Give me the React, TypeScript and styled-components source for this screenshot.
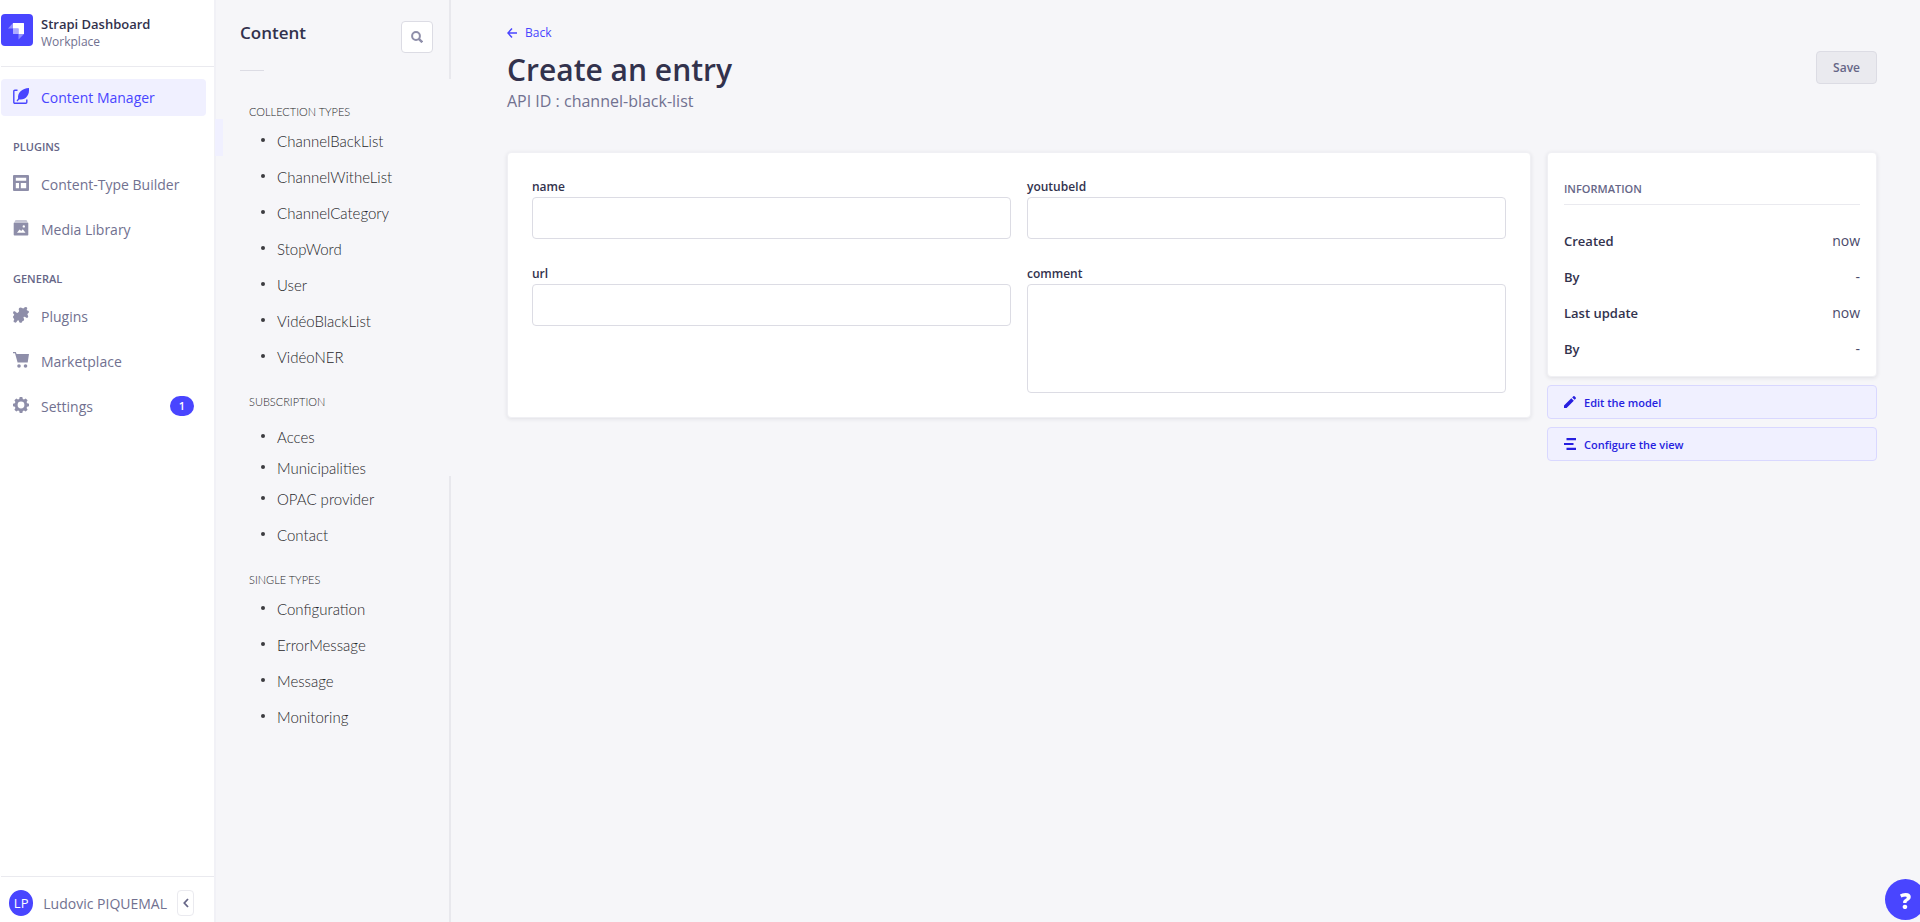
import React from "react";
import styled, { createGlobalStyle, css } from "styled-components";

const GlobalStyle = createGlobalStyle`
  *, *::before, *::after { box-sizing: border-box; }
  body {
    margin: 0;
    background: #f6f6f9;
    color: #32324d;
    font-family: "Open Sans", "Noto Sans", sans-serif;
    font-size: 14px;
    overflow-x: hidden;
  }
  h1, h2, h3, p, ul, dl, dd { margin: 0; padding: 0; }
  ul { list-style: none; }
  a { color: inherit; text-decoration: none; }
  button, input, textarea { font: inherit; }
  svg { display: block; flex: none; }
`;

const Shell = styled.div`
  display: flex;
  min-height: 100vh;
`;

/* Primary navigation */

const Sidebar = styled.nav`
  flex: none;
  display: flex;
  flex-direction: column;
  width: 216px;
  padding-left: 1px;
  background: #fff;
  border-right: 2px solid #f1f1f6;
`;

const Brand = styled.header`
  display: flex;
  align-items: center;
  gap: 8px;
  height: 67px;
  padding-bottom: 7px;
  border-bottom: 1px solid #eaeaef;
`;

const BrandText = styled.div`
  padding-top: 7px;
`;

const BrandName = styled.p`
  font-size: 13px;
  font-weight: 600;
  line-height: 18px;
`;

const BrandPlace = styled.p`
  color: #717190;
  font-size: 12px;
  line-height: 18px;
`;

const MainLinks = styled.div`
  flex: 1;
  padding-top: 12px;
`;

const NavSection = styled.section`
  padding-top: 22px;

  & + & { padding-top: 18px; }
`;

const SectionTitle = styled.h2`
  padding: 0 12px 6px;
  color: #666687;
  font-size: 11px;
  font-weight: 600;
  line-height: 18px;
  text-transform: uppercase;
`;

const NavLink = styled.a<{ $active?: boolean }>`
  display: flex;
  align-items: center;
  gap: 12px;
  height: 45px;
  margin-right: 8px;
  padding: 0 12px;
  color: #717190;
  border-radius: 4px;

  svg {
    margin-bottom: 3px;
    color: #8e8ea9;
  }

  ${(p) =>
    p.$active &&
    css`
      height: 37px;
      background: #f0f0ff;
      color: #4945ff;
      svg { color: #4945ff; }
    `}
`;

const Count = styled.span`
  display: grid;
  place-items: center;
  width: 24px;
  height: 20px;
  margin: 0 0 2px auto;
  border-radius: 10px;
  background: #4945ff;
  color: #fff;
  font-size: 11px;
  font-weight: 600;
`;

const UserBar = styled.footer`
  position: sticky;
  bottom: 0;
  display: flex;
  align-items: center;
  gap: 10px;
  height: 46px;
  padding: 7px 20px 0 8px;
  border-top: 1px solid #eaeaef;
  color: #717190;
  white-space: nowrap;
`;

const Avatar = styled.span`
  display: grid;
  place-items: center;
  width: 26px;
  height: 26px;
  border-radius: 50%;
  background: #4945ff;
  color: #fff;
  font-size: 13px;
`;

const CollapseButton = styled.button`
  display: grid;
  place-items: center;
  width: 18px;
  height: 26px;
  margin-left: auto;
  padding: 0;
  border: 1px solid #eaeaef;
  border-radius: 4px;
  background: #fff;
  color: #666687;
`;

/* Content types panel; its right rule is open between the header and the middle of the list */

const Panel = styled.aside`
  flex: none;
  width: 235px;
  background: linear-gradient(#e8e8ed 79px, transparent 79px 476px, #e8e8ed 476px) right / 2px 100% no-repeat;
`;

const PanelHead = styled.header`
  display: flex;
  justify-content: space-between;
  align-items: flex-start;
  margin: 0 18px 0 24px;
  padding-top: 21px;
`;

const PanelTitle = styled.h2`
  font-size: 17px;
  font-weight: 600;
  line-height: 24px;
`;

const SearchButton = styled.button`
  display: grid;
  place-items: center;
  width: 32px;
  height: 32px;
  padding: 0;
  border: 1px solid #dcdce4;
  border-radius: 4px;
  background: #fff;
  color: #8e8ea9;
`;

const ShortRule = styled.hr`
  width: 24px;
  height: 1px;
  margin: 17px 0 0 24px;
  border: 0;
  background: #dcdce4;
`;

const TypesArea = styled.div`
  padding-top: 14px;
  color: #26262a;
  font-family: Lato, "Open Sans", sans-serif;
  font-weight: 300;
`;

const TypesTitle = styled.h3<{ $loose?: boolean }>`
  padding: 18px 0 ${(p) => (p.$loose ? 8 : 2)}px 33px;
  font-size: 11px;
  font-weight: 300;
  line-height: 18px;
  text-transform: uppercase;
`;

const TypeRow = styled.li<{ $tight?: boolean }>`
  display: flex;
  align-items: center;
  gap: 12px;
  height: ${(p) => (p.$tight ? 26 : 36)}px;
  padding-left: 45px;
  font-size: 15px;

  &::before {
    content: "";
    width: 4px;
    height: 4px;
    margin-bottom: 2px;
    border-radius: 50%;
    background: #3c3c40;
  }
`;

const ActiveMark = styled.span`
  position: absolute;
  top: 119px;
  left: 215px;
  width: 8px;
  height: 37px;
  background: #f0f0ff;
`;

/* Entry editor */

const Main = styled.main`
  flex: 1;
  min-width: 0;
  padding: 23px 43px 56px 56px;
`;

const BackLink = styled.a`
  display: inline-flex;
  align-items: center;
  gap: 8px;
  color: #4945ff;
  font-size: 12px;
  line-height: 18px;
`;

const TitleRow = styled.div`
  display: flex;
  justify-content: space-between;
  align-items: flex-start;
  padding-top: 8px;
`;

const PageTitle = styled.h1`
  font-size: 30px;
  font-weight: 600;
  line-height: 40px;
`;

const Subtitle = styled.p`
  margin-bottom: 40px;
  color: #717190;
  font-size: 16px;
  line-height: 22px;
`;

const SaveButton = styled.button`
  height: 33px;
  margin-top: 1px;
  padding: 0 16px;
  border: 1px solid #dcdce4;
  border-radius: 4px;
  background: #eaeaef;
  color: #666687;
  font-size: 12px;
  font-weight: 600;
`;

const Columns = styled.div`
  display: grid;
  grid-template-columns: minmax(0, 1024fr) minmax(0, 330fr);
  gap: 16px;
  align-items: start;
`;

const Card = styled.section`
  border: 1px solid #f0f0f4;
  border-radius: 4px;
  background: #fff;
  box-shadow: 0 1px 4px rgba(33, 33, 52, 0.1);
`;

const FormCard = styled(Card)`
  display: grid;
  grid-template-columns: 1fr 1fr;
  gap: 26px 16px;
  align-items: start;
  padding: 25px 24px 24px;
`;

const Field = styled.div`
  display: flex;
  flex-direction: column;
`;

const Label = styled.label`
  padding-bottom: 1px;
  font-size: 12px;
  font-weight: 600;
  line-height: 18px;
`;

const control = css`
  width: 100%;
  padding: 0 16px;
  border: 1px solid #dcdce4;
  border-radius: 4px;
  background: #fff;
  color: inherit;
  outline: none;
`;

const TextInput = styled.input`
  ${control}
  height: 42px;
`;

const TextArea = styled.textarea`
  ${control}
  display: block;
  height: 109px;
  padding: 12px 16px;
  resize: none;
`;

const SideColumn = styled.div`
  display: flex;
  flex-direction: column;
  gap: 8px;
`;

const InfoCard = styled(Card)`
  padding: 27px 16px 9px;
`;

const InfoTitle = styled.h2`
  margin-bottom: 18px;
  padding-bottom: 6px;
  border-bottom: 1px solid #eaeaef;
  color: #666687;
  font-size: 11px;
  font-weight: 600;
  line-height: 18px;
  text-transform: uppercase;
`;

const InfoRow = styled.div`
  display: flex;
  justify-content: space-between;
  padding: 8px 0;
  line-height: 20px;

  dt {
    font-size: 13px;
    font-weight: 600;
  }
  dd { color: #4a4a6a; }
`;

const ActionButton = styled.button`
  display: flex;
  align-items: center;
  gap: 8px;
  height: 34px;
  padding: 0 16px;
  border: 1px solid #d9d8ff;
  border-radius: 4px;
  background: #f0f0ff;
  color: #271fe0;
  font-size: 11px;
  font-weight: 600;
`;

const HelpButton = styled.button`
  position: fixed;
  right: -6px;
  bottom: 2px;
  display: grid;
  place-items: center;
  width: 41px;
  height: 41px;
  padding: 0;
  border: 0;
  border-radius: 50%;
  background: #4945ff;
  color: #fff;
  font-size: 22px;
  font-weight: 800;
  line-height: 1;
`;

/* Icons */

const Logo = () => (
  <svg width="32" height="32" viewBox="0 0 32 32" aria-hidden="true">
    <rect width="32" height="32" rx="4" fill="#4945ff" />
    <path d="M12 9h10.500a.5.5 0 0 1 .5.5V20h-5.500v-5.500H12z" fill="#fff" />
    <path d="M12 9v5.500H7z M17.500 20H23l-5.500 5.500z" fill="#fff" opacity=".4" />
    <path d="M12 14.500h5.500V20H12.500a.5.5 0 0 1-.5-.5z" fill="#fff" opacity=".55" />
  </svg>
);

const WriteIcon = () => (
  <svg width="16" height="16" viewBox="0 0 16 16" fill="currentColor" aria-hidden="true">
    <path d="M4.500 2.200H1.800A1 1 0 0 0 .8 3.200v11a1 1 0 0 0 1 1h11a1 1 0 0 0 1-1V11.500" fill="none" stroke="currentColor" strokeWidth="1.400" />
    <path d="M16 0v2.500C16 5.500 14.800 8 12.800 9.800c-2 1.500-4.500 1.700-6.600 1.700L4.300 13.400l-.8-.7 1.600-2.200C4.700 7.500 5.600 5 7.600 3.200 9.700 1.300 12.500.2 16 0z" />
  </svg>
);

const LayoutIcon = () => (
  <svg width="16" height="16" viewBox="0 0 16 16" aria-hidden="true">
    <path fill="currentColor" fillRule="evenodd" d="M1 0h14a1 1 0 0 1 1 1v14a1 1 0 0 1-1 1H1a1 1 0 0 1-1-1V1a1 1 0 0 1 1-1zm1.800 2.700v3h10.400v-3zm0 5.300v5.300H6V8zm5 0v5.300h5.400V8z" />
  </svg>
);

const MediaIcon = () => (
  <svg width="16" height="16" viewBox="0 0 16 16" aria-hidden="true">
    <path d="M2.500 0h11l1 2h-13z" fill="currentColor" opacity=".5" />
    <path fill="currentColor" fillRule="evenodd" d="M1.500 2.500h13a.8.8 0 0 1 .8.8v11.400a.8.8 0 0 1-.8.800h-13a.8.800 0 0 1-.8-.8V3.300a.8.800 0 0 1 .8-.8zM4 12.800h8.500L9.800 9.200 8.200 11 6.600 9.600zM10.800 5.200a1.200 1.200 0 1 0 0 2.400 1.200 1.200 0 0 0 0-2.400z" />
  </svg>
);

const PuzzleIcon = () => (
  <svg width="16" height="16" viewBox="0 0 16 16" fill="currentColor" aria-hidden="true">
    <path d="M6 3.500C5.300 2 6 .4 7.600.4c1.400 0 1.700 1.100 2.700 1 .9-.1 1.200-1.400 2.700-1.300 1.300.1 1.500 1.500.9 2.200-.4.500-.2 1.200.5 1.200 1.200.1 1.700.9 1.500 1.800-.2 1-1.400 1.100-1.500 2 0 .9.800 1.300.8 2.300 0 1.200-1.300 1.600-2.200 1-.9-.7-1.700-1.300-2.300-.6-.6.600.2 1.300.4 2.300.2 1.300-.9 1.900-1.800 1.900 0 1.300-1.700 2.100-2.700 1.200-.7-.7-.4-1.600-1-2-.8-.5-1.500.6-2.100 1.700-.6 1-2.600.9-2.900-.5-.2-1.100.7-1.600.6-2.400C1.100 11.300 0 11.300 0 10c0-1.300 1.200-1.500 1.200-2.300 0-.7-1.200-.9-1.100-2.200C.2 4.200 1.700 4 2.500 4.800c.7.700 1.700 1.600 2.600.8C5.700 5 6.400 4.400 6 3.500z" />
  </svg>
);

const CartIcon = () => (
  <svg width="16" height="16" viewBox="0 0 16 16" fill="currentColor" aria-hidden="true">
    <path d="M0 0h2.800l.8 2H16l-1.300 8.500H4.600L2 1.300H0z" />
    <circle cx="6" cy="14" r="1.800" />
    <circle cx="12.500" cy="14" r="1.800" />
  </svg>
);

const GearIcon = () => (
  <svg width="16" height="16" viewBox="0 0 16 16" fill="currentColor" aria-hidden="true">
    <path fillRule="evenodd" d="M6.700 0h2.600l.5 1.900 1.200.5 1.700-1 1.900 1.900-1 1.700.5 1.200L16 6.700v2.600l-1.900.5-.5 1.200 1 1.700-1.900 1.900-1.700-1-1.200.5-.5 1.900H6.700l-.5-1.900-1.200-.5-1.700 1-1.900-1.900 1-1.700-.5-1.200L0 9.300V6.700l1.900-.5.500-1.200-1-1.700 1.900-1.900 1.700 1 1.200-.5zM8 4.600a3.400 3.400 0 1 0 0 6.800 3.400 3.400 0 0 0 0-6.800z" />
  </svg>
);

const SearchIcon = () => (
  <svg width="12" height="12" viewBox="0 0 12 12" fill="none" stroke="currentColor" strokeWidth="2" aria-hidden="true">
    <circle cx="5" cy="5" r="3.900" />
    <path d="M7.800 7.800l3.500 3.500" strokeWidth="2.400" />
  </svg>
);

const ChevronIcon = () => (
  <svg width="6" height="10" viewBox="0 0 6 10" fill="none" stroke="currentColor" strokeWidth="1.800" aria-hidden="true">
    <path d="M5 1L1.300 5 5 9" />
  </svg>
);

const ArrowIcon = () => (
  <svg width="10" height="10" viewBox="0 0 10 10" fill="none" stroke="currentColor" strokeWidth="1.400" aria-hidden="true">
    <path d="M10 5H1M5 .6L.9 5 5 9.400" />
  </svg>
);

const PencilIcon = () => (
  <svg width="12" height="12" viewBox="0 0 12 12" fill="currentColor" aria-hidden="true">
    <path d="M7.300 2.200l2.500 2.500L2.600 11.900H0V9.400zM8.200 1.400L9.300.3a1 1 0 0 1 1.300 0l1.100 1.100a1 1 0 0 1 0 1.300l-1.100 1.100z" />
  </svg>
);

const LayersIcon = () => (
  <svg width="12" height="12" viewBox="0 0 12 12" fill="currentColor" aria-hidden="true">
    <path d="M2.500 0H12v2.300H2.500zM0 4.900h9.500v2.200H0zM2.500 9.700H12V12H2.500z" />
  </svg>
);

const navSections = [
  {
    title: "Plugins",
    links: [
      { label: "Content-Type Builder", Icon: LayoutIcon },
      { label: "Media Library", Icon: MediaIcon },
    ],
  },
  {
    title: "General",
    links: [
      { label: "Plugins", Icon: PuzzleIcon },
      { label: "Marketplace", Icon: CartIcon },
      { label: "Settings", Icon: GearIcon, count: 1 },
    ],
  },
] as { title: string; links: { label: string; Icon: () => React.JSX.Element; count?: number }[] }[];

const typeGroups = [
  {
    title: "Collection types",
    items: ["ChannelBackList", "ChannelWitheList", "ChannelCategory", "StopWord", "User", "VidéoBlackList", "VidéoNER"],
  },
  { title: "Subscription", loose: true, items: ["Acces", "Municipalities", "OPAC provider", "Contact"] },
  { title: "Single types", items: ["Configuration", "ErrorMessage", "Message", "Monitoring"] },
];

const information = [
  ["Created", "now"],
  ["By", "-"],
  ["Last update", "now"],
  ["By", "-"],
];

export default function App() {
  return (
    <>
      <GlobalStyle />
      <Shell>
        <Sidebar aria-label="Main">
          <Brand>
            <Logo />
            <BrandText>
              <BrandName>Strapi Dashboard</BrandName>
              <BrandPlace>Workplace</BrandPlace>
            </BrandText>
          </Brand>
          <MainLinks>
            <NavLink href="#content-manager" $active>
              <WriteIcon />
              Content Manager
            </NavLink>
            {navSections.map((section) => (
              <NavSection key={section.title}>
                <SectionTitle>{section.title}</SectionTitle>
                {section.links.map(({ label, Icon, count }) => (
                  <NavLink key={label} href="#section">
                    <Icon />
                    {label}
                    {count && <Count>{count}</Count>}
                  </NavLink>
                ))}
              </NavSection>
            ))}
          </MainLinks>
          <UserBar>
            <Avatar>LP</Avatar>
            Ludovic PIQUEMAL
            <CollapseButton type="button" aria-label="Collapse the navigation">
              <ChevronIcon />
            </CollapseButton>
          </UserBar>
        </Sidebar>

        <Panel>
          <ActiveMark />
          <PanelHead>
            <PanelTitle>Content</PanelTitle>
            <SearchButton type="button" aria-label="Search">
              <SearchIcon />
            </SearchButton>
          </PanelHead>
          <ShortRule />
          <TypesArea>
            {typeGroups.map((group) => (
              <section key={group.title}>
                <TypesTitle $loose={group.loose}>{group.title}</TypesTitle>
                <ul>
                  {group.items.map((item) => (
                    <TypeRow key={item} $tight={item === "Municipalities"}>
                      <a href="#type">{item}</a>
                    </TypeRow>
                  ))}
                </ul>
              </section>
            ))}
          </TypesArea>
        </Panel>

        <Main>
          <BackLink href="#back">
            <ArrowIcon />
            Back
          </BackLink>
          <TitleRow>
            <PageTitle>Create an entry</PageTitle>
            <SaveButton type="button">Save</SaveButton>
          </TitleRow>
          <Subtitle>API ID : channel-black-list</Subtitle>
          <Columns>
            <FormCard>
              <Field>
                <Label htmlFor="name">name</Label>
                <TextInput id="name" />
              </Field>
              <Field>
                <Label htmlFor="youtubeId">youtubeId</Label>
                <TextInput id="youtubeId" />
              </Field>
              <Field>
                <Label htmlFor="url">url</Label>
                <TextInput id="url" />
              </Field>
              <Field>
                <Label htmlFor="comment">comment</Label>
                <TextArea id="comment" />
              </Field>
            </FormCard>
            <SideColumn>
              <InfoCard>
                <InfoTitle>Information</InfoTitle>
                <dl>
                  {information.map(([term, value], i) => (
                    <InfoRow key={i}>
                      <dt>{term}</dt>
                      <dd>{value}</dd>
                    </InfoRow>
                  ))}
                </dl>
              </InfoCard>
              <ActionButton type="button">
                <PencilIcon />
                Edit the model
              </ActionButton>
              <ActionButton type="button">
                <LayersIcon />
                Configure the view
              </ActionButton>
            </SideColumn>
          </Columns>
        </Main>
      </Shell>
      <HelpButton type="button" aria-label="Help">
        ?
      </HelpButton>
    </>
  );
}
